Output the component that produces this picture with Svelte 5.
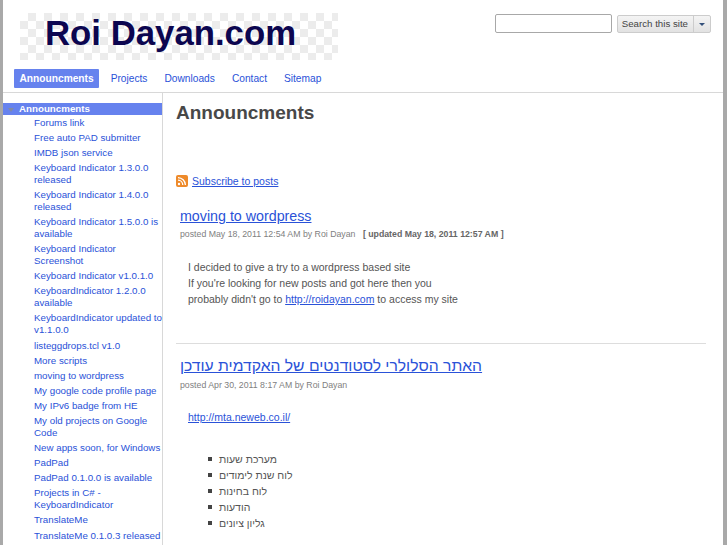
<script>
  const pages = [
    ['Forums link'],
    ['Free auto PAD submitter'],
    ['IMDB json service'],
    ['Keyboard Indicator 1.3.0.0', 'released'],
    ['Keyboard Indicator 1.4.0.0', 'released'],
    ['Keyboard Indicator 1.5.0.0 is', 'available'],
    ['Keyboard Indicator', 'Screenshot'],
    ['Keyboard Indicator v1.0.1.0'],
    ['KeyboardIndicator 1.2.0.0', 'available'],
    ['KeyboardIndicator updated to', 'v1.1.0.0'],
    ['listeggdrops.tcl v1.0'],
    ['More scripts'],
    ['moving to wordpress'],
    ['My google code profile page'],
    ['My IPv6 badge from HE'],
    ['My old projects on Google', 'Code'],
    ['New apps soon, for Windows'],
    ['PadPad'],
    ['PadPad 0.1.0.0 is available'],
    ['Projects in C# -', 'KeyboardIndicator'],
    ['TranslateMe'],
    ['TranslateMe 0.1.0.3 released']
  ];
  const tabs = ['Announcments', 'Projects', 'Downloads', 'Contact', 'Sitemap'];
  const services = ['מערכת שעות', 'לוח שנת לימודים', 'לוח בחינות', 'הודעות', 'גליון ציונים'];
</script>

<div class="page">
  <header>
    <div class="top">
      <div class="logo">Roi Dayan.com</div>
      <div class="search">
        <input type="text" />
        <div class="btn"><span class="label">Search this site</span><span class="drop"><i></i></span></div>
      </div>
    </div>
    <nav>
      {#each tabs as tab, i}
        <a href="#top" class:active={i === 0}>{tab}</a>
      {/each}
    </nav>
  </header>

  <div class="body">
    <aside>
      <div class="current"><i></i>Announcments</div>
      <ul>
        {#each pages as lines}
          <li><a href="#top">{#each lines as line, i}{#if i > 0}<br />{/if}{line}{/each}</a></li>
        {/each}
      </ul>
    </aside>

    <main>
      <h1>Announcments</h1>
      <div class="subscribe">
        <svg width="12" height="12" viewBox="0 0 12 12">
          <rect width="12" height="12" rx="2" fill="#ee8a2a" />
          <circle cx="3" cy="9" r="1.2" fill="#fff" />
          <path d="M2 5.2a5 5 0 0 1 4.8 4.8M2 2.6a7.6 7.6 0 0 1 7.4 7.4" fill="none" stroke="#fff" stroke-width="1.3" />
        </svg>
        <a href="#top">Subscribe to posts</a>
      </div>

      <article class="first">
        <h2><a href="#top">moving to wordpress</a></h2>
        <p class="meta">posted May 18, 2011 12:54 AM by Roi Dayan <b>[ updated May 18, 2011 12:57 AM ]</b></p>
        <div class="text">
          I decided to give a try to a wordpress based site<br />
          If you're looking for new posts and got here then you<br />
          probably didn't go to <a href="#top">http://roidayan.com</a> to access my site
        </div>
      </article>

      <article class="second">
        <h2 class="he"><a href="#top" dir="rtl">האתר הסלולרי לסטודנטים של האקדמית עודכן</a></h2>
        <p class="meta">posted Apr 30, 2011 8:17 AM by Roi Dayan</p>
        <div class="text"><a href="#top">http://mta.neweb.co.il/</a></div>
        <ul class="services">
          {#each services as item}
            <li><span dir="rtl">{item}</span></li>
          {/each}
        </ul>
      </article>
    </main>
  </div>
</div>

<style>
  :global(body) {
    margin: 0;
    background: #fff;
    overflow: hidden;
  }
  .page {
    height: 545px;
    overflow: hidden;
    box-sizing: border-box;
    border-left: 3px solid #a9a9a9;
    border-right: 4px solid #a9a9a9;
    font-family: "Liberation Sans", Arial, sans-serif;
    font-size: 10.5px;
    color: #555;
  }
  a {
    color: #2a52d8;
  }
  header {
    height: 92px;
    border-bottom: 1px solid #d8d8d8;
    display: flex;
    flex-direction: column;
  }
  .top {
    display: flex;
    justify-content: space-between;
    padding: 13px 12px 0 17px;
  }
  .logo {
    width: 318px;
    height: 47px;
    box-sizing: border-box;
    padding-left: 25px;
    font-size: 34.75px;
    line-height: 41px;
    font-weight: bold;
    color: #0c0650;
    background-color: #fff;
    background-image: repeating-conic-gradient(#ececec 0 25%, #fff 0 50%);
    background-size: 16px 16px;
  }
  .search {
    display: flex;
    align-items: flex-start;
    gap: 5px;
    margin-top: 1px;
  }
  input {
    width: 117px;
    height: 19px;
    box-sizing: border-box;
    border: 1px solid #a8a8a8;
    border-radius: 2px;
    padding: 0;
    background: #fff;
  }
  .btn {
    display: flex;
    height: 18px;
    margin-top: 1px;
    box-sizing: border-box;
    border: 1px solid #ccc;
    border-radius: 2px;
    background: linear-gradient(#f4f4f4, #e2e2e2);
    color: #444;
    font-size: 9.7px;
    line-height: 16px;
  }
  .label {
    padding: 0 5px 0 4px;
    border-right: 1px solid #ccc;
  }
  .drop {
    width: 16px;
    display: flex;
    align-items: center;
    justify-content: center;
  }
  .drop i {
    border: 3px solid transparent;
    border-top: 3px solid #33507a;
    border-bottom: 0;
  }
  nav {
    display: flex;
    margin-top: 9px;
    padding-left: 11px;
    gap: 6px;
    font-size: 10.2px;
  }
  nav a {
    padding: 0 5.5px;
    height: 19px;
    line-height: 19px;
    text-decoration: none;
    border-radius: 1px;
  }
  nav a.active {
    background: #6682ee;
    color: #fff;
    font-weight: bold;
  }
  .body {
    display: flex;
  }
  aside {
    width: 159px;
    flex: none;
    border-right: 1px solid #d8d8d8;
    padding-top: 10px;
    height: 442px;
    font-size: 9.75px;
  }
  .current {
    height: 12px;
    line-height: 12px;
    background: #6682ee;
    color: #fff;
    font-weight: bold;
    display: flex;
    align-items: center;
  }
  .current i {
    flex: none;
    margin: 1px 5px 0 5px;
    border: 3px solid transparent;
    border-top: 4px solid #7f8aa8;
    border-bottom: 0;
  }
  aside ul {
    list-style: none;
    margin: -1.5px 0 0;
    padding: 0 0 0 31px;
  }
  aside li {
    margin-top: 3.1px;
    line-height: 12px;
    white-space: nowrap;
  }
  aside a {
    text-decoration: none;
  }
  main {
    flex: 1;
    min-width: 0;
    padding: 0 17px 0 13px;
  }
  h1 {
    margin: 8px 0 0;
    font-size: 19px;
    line-height: 24px;
    color: #484848;
  }
  .subscribe {
    margin-top: 49px;
    display: flex;
    align-items: center;
    gap: 4px;
    line-height: 14px;
  }
  article {
    padding-left: 4px;
  }
  .first {
    margin-top: 19px;
    padding-bottom: 36px;
    border-bottom: 1px solid #ddd;
  }
  .second {
    margin-top: 13px;
  }
  h2 {
    margin: 0;
    font-size: 14.25px;
    font-weight: normal;
    line-height: 18px;
  }
  h2.he {
    font-size: 15.7px;
  }
  .meta {
    margin: 3px 0 0;
    font-size: 8.75px;
    line-height: 13px;
    color: #808080;
  }
  .meta b {
    margin-left: 5px;
    color: #666;
  }
  .text {
    margin-top: 18px;
    padding-left: 8px;
    line-height: 16px;
  }
  .second .meta {
    margin-top: 4px;
  }
  .second .text {
    margin-top: 17px;
  }
  .services {
    margin: 26px 0 0;
    padding: 0 0 0 28px;
    list-style: none;
  }
  .services li {
    line-height: 16px;
    display: flex;
    align-items: center;
    gap: 7px;
  }
  .services li::before {
    content: "";
    width: 4px;
    height: 4px;
    background: #444;
  }
</style>
